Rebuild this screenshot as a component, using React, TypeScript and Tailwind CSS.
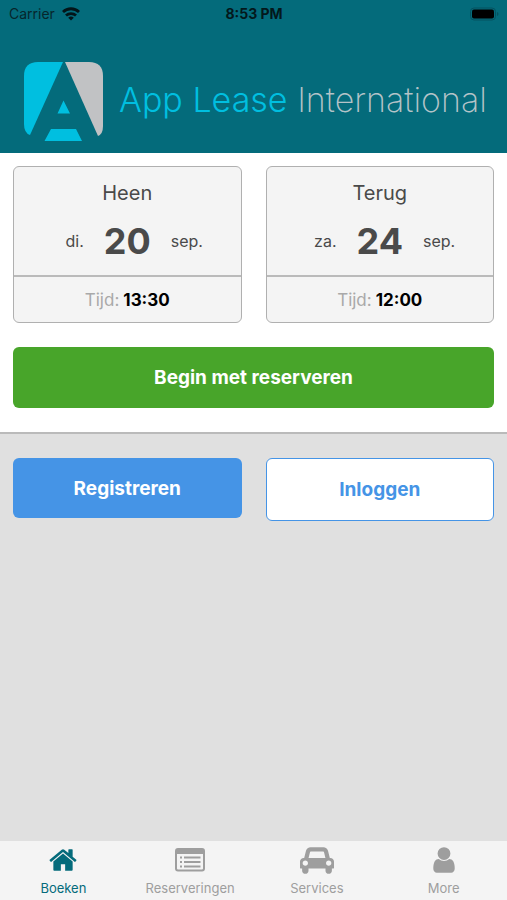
import { useState } from "react";
import type { ReactNode } from "react";

const HOME_PATH =
  "M1472 992v480q0 26-19 45t-45 19h-384v-384h-256v384h-384q-26 0-45-19t-19-45v-480q0-1 .5-3t.5-3l575-474 575 474q1 2 1 6zm223-69l-62 74q-8 9-21 11h-3q-13 0-21-7l-692-577-692 577q-12 8-24 7-13-2-21-11l-62-74q-8-10-7-23.5t11-21.5l719-599q32-26 76-26t76 26l244 204v-195q0-14 9-23t23-9h192q14 0 23 9t9 23v408l219 182q10 8 11 21.5t-7 23.5z";
const CAR_PATH =
  "M480 1088q0-66-47-113t-113-47-113 47-47 113 47 113 113 47 113-47 47-113zm36-320h1016l-89-357q-2-8-14-17.5t-21-9.5h-768q-9 0-21 9.5t-14 17.5zm1372 320q0-66-47-113t-113-47-113 47-47 113 47 113 113 47 113-47 47-113zm160-96v384q0 14-9 23t-23 9h-96v128q0 80-56 136t-136 56-136-56-56-136v-128h-1024v128q0 80-56 136t-136 56-136-56-56-136v-128h-96q-14 0-23-9t-9-23v-384q0-93 65.5-158.5t158.5-65.5h28l105-419q23-94 104-157.5t179-63.5h768q98 0 179 63.5t104 157.5l105 419h28q93 0 158.5 65.5t65.5 158.5z";
const USER_PATH =
  "M1536 1399q0 109-62.5 187t-150.500 78h-854q-88 0-150.500-78t-62.500-187q0-85 8.500-160.500t31.500-152 58.500-131 94-89 134.500-34.500q131 128 313 128t313-128q76 0 134.500 34.500t94 89 58.500 131 31.500 152 8.500 160.500zm-256-887q0 159-112.500 271.500t-271.500 112.500-271.500-112.500-112.500-271.500 112.500-271.500 271.500-112.500 271.500 112.500 112.500 271.500z";

const TABS: { id: string; label: string; icon: ReactNode }[] = [
  {
    id: "book",
    label: "Boeken",
    icon: (
      <svg viewBox="0 0 1792 1792" className="size-[30px]" fill="currentColor" aria-hidden="true">
        <path d={HOME_PATH} />
      </svg>
    ),
  },
  {
    id: "reservations",
    label: "Reserveringen",
    icon: (
      <svg viewBox="0 0 30 30" className="size-[30px]" aria-hidden="true">
        <rect x="1" y="4" width="28" height="21.500" rx="2" fill="none" stroke="currentColor" strokeWidth="2" />
        <path d="M1 4.500h28v4.500H1z" fill="currentColor" />
        <path d="M5 12.500h2M5 17h2M5 21.500h2M9 12.500h16.500M9 17h16.500M9 21.500h16.500" stroke="currentColor" strokeWidth="1.800" />
      </svg>
    ),
  },
  {
    id: "services",
    label: "Services",
    icon: (
      <svg viewBox="0 0 2048 1792" className="h-[30px] w-[34px]" fill="currentColor" aria-hidden="true">
        <path d={CAR_PATH} />
      </svg>
    ),
  },
  {
    id: "more",
    label: "More",
    icon: (
      <svg viewBox="0 0 1792 1792" className="size-[30px]" fill="currentColor" aria-hidden="true">
        <path d={USER_PATH} />
      </svg>
    ),
  },
];

function StatusBar() {
  return (
    <div className="grid h-[27px] grid-cols-3 items-center pr-2 pl-[9px] text-[14px] text-[#06262c]">
      <div className="flex items-center gap-[7px]">
        <span>Carrier</span>
        <svg viewBox="0 0 18 14" className="h-[14px] w-[18px]" fill="none" stroke="#031519" strokeWidth="2.800" aria-hidden="true">
          <path d="M1 5a11.500 11.500 0 0 1 16 0M4 8.600a7.300 7.300 0 0 1 10 0" />
          <path d="M6.200 10.800a4 4 0 0 1 5.600 0L9 13.600z" fill="#031519" stroke="none" />
        </svg>
      </div>
      <span className="text-center font-bold text-[#03181c]">8:53 PM</span>
      <svg viewBox="0 0 30 14" className="h-[14px] w-[30px] justify-self-end" aria-hidden="true">
        <rect x="1.500" y="1" width="25" height="12" rx="3.500" fill="none" stroke="#045260" />
        <rect x="3" y="2.500" width="22" height="9" rx="2" fill="#000" />
        <path d="M28 5v4q1.500-.5 1.500-2T28 5z" fill="#045260" />
      </svg>
    </div>
  );
}

function Logo() {
  return (
    <div className="flex items-center gap-4 px-6 pt-[35px]">
      <svg viewBox="0 0 79 79" className="size-[79px] shrink-0" aria-hidden="true">
        <path d="M14 0H39L6 73Q0 71 0 62V14Q0 0 14 0z" fill="#00bfe0" />
        <path d="M41 0H65Q79 0 79 14V64Q79 72 74 74z" fill="#c1c2c4" />
        <path d="M39.500 38.500L46 51.500H33.500zM27 67H52L58 79H20.500z" fill="#00bfe0" />
      </svg>
      <h1 className="pb-1 text-[34px] leading-9 font-extralight whitespace-nowrap text-[#b4c3c8]">
        <span className="font-light text-[#00bfe0]">App Lease</span> International
      </h1>
    </div>
  );
}

type DateCardProps = { title: string; day: string; date: string; month: string; time: string };

function DateCard({ title, day, date, month, time }: DateCardProps) {
  return (
    <button type="button" className="rounded-md border border-[#b0b0b0] bg-[#f4f4f4] text-[#4a4a4a]">
      <div className="flex h-[110px] flex-col border-b-2 border-[#bababa] pt-[10px]">
        <span className="text-[20px] leading-8">{title}</span>
        <div className="grid grid-cols-[1fr_auto_1fr] items-center pt-[11px] text-[16px]">
          <span className="pr-5 text-right">{day}</span>
          <span className="text-[36px] leading-[42px] font-bold">{date}</span>
          <span className="pl-5 text-left">{month}</span>
        </div>
      </div>
      <div className="flex h-[45px] items-center justify-center gap-1 pt-[2px] text-[17px]">
        <span className="text-[#a9a9a9]">Tijd:</span>
        <span className="font-bold text-black">{time}</span>
      </div>
    </button>
  );
}

export default function App() {
  const [tab, setTab] = useState("book");

  return (
    <div className="flex min-h-screen flex-col bg-[#e0e0e0] font-[Inter,sans-serif]">
      <header className="h-[153px] bg-[#046b7b]">
        <StatusBar />
        <Logo />
      </header>

      <main className="flex flex-1 flex-col">
        <section className="border-b-2 border-[#bababa] bg-white px-[13px] pt-[13px] pb-6">
          <div className="grid grid-cols-2 gap-6">
            <DateCard title="Heen" day="di." date="20" month="sep." time="13:30" />
            <DateCard title="Terug" day="za." date="24" month="sep." time="12:00" />
          </div>
          <button type="button" className="mt-6 h-[61px] w-full rounded-md bg-[#48a52a] pt-[2px] text-[19px] font-bold text-white">
            Begin met reserveren
          </button>
        </section>

        <section className="grid grid-cols-2 items-start gap-6 px-[13px] pt-6">
          <button type="button" className="h-[60px] rounded-md bg-[#4594e6] pt-[2px] text-[19px] font-bold text-white">
            Registreren
          </button>
          <button type="button" className="h-[63px] rounded-md border border-[#4594e6] bg-white pt-[2px] text-[19px] font-bold text-[#4594e6]">
            Inloggen
          </button>
        </section>
      </main>

      <nav className="grid h-[59px] grid-cols-4 bg-[#f4f4f4]">
        {TABS.map((t) => (
          <button
            key={t.id}
            type="button"
            onClick={() => setTab(t.id)}
            className={`flex flex-col items-center pt-1 ${tab === t.id ? "text-[#046b7b]" : "text-[#9e9e9e]"}`}
          >
            {t.icon}
            <span className="text-[13px] leading-[26px]">{t.label}</span>
          </button>
        ))}
      </nav>
    </div>
  );
}
